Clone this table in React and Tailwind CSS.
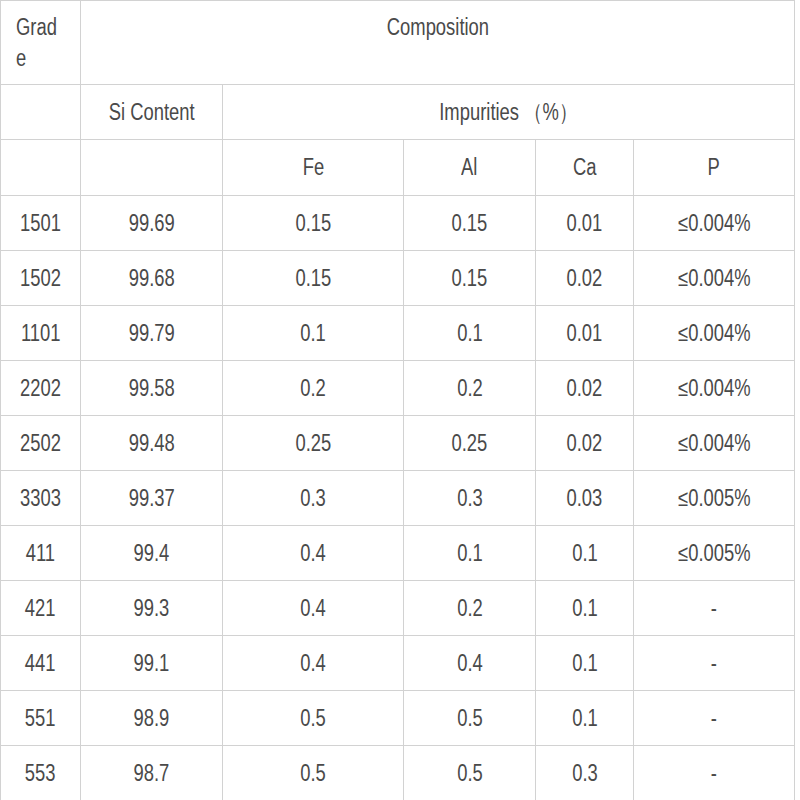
import React from 'react';

const rows = [
    ['1501', '99.69', '0.15', '0.15', '0.01', '≤0.004%'],
    ['1502', '99.68', '0.15', '0.15', '0.02', '≤0.004%'],
    ['1101', '99.79', '0.1', '0.1', '0.01', '≤0.004%'],
    ['2202', '99.58', '0.2', '0.2', '0.02', '≤0.004%'],
    ['2502', '99.48', '0.25', '0.25', '0.02', '≤0.004%'],
    ['3303', '99.37', '0.3', '0.3', '0.03', '≤0.005%'],
    ['411', '99.4', '0.4', '0.1', '0.1', '≤0.005%'],
    ['421', '99.3', '0.4', '0.2', '0.1', '-'],
    ['441', '99.1', '0.4', '0.4', '0.1', '-'],
    ['551', '98.9', '0.5', '0.5', '0.1', '-'],
    ['553', '98.7', '0.5', '0.5', '0.3', '-'],
];

const cell = 'border border-[#d2d2d2] text-center align-middle';

// the source text is a narrow Arial; squeeze Liberation Sans to match
const T = ({ children }) => (
    <span className="inline-block whitespace-nowrap scale-x-[0.8]">{children}</span>
);

const App = () => {
    return (
        <div className="w-[800px] h-[800px] bg-white overflow-hidden text-[#4a4a4a] text-[23px] font-['Liberation_Sans',Arial,sans-serif]">
            <table className="table-fixed border-collapse w-[794px]">
                <colgroup>
                    <col className="w-[80px]" />
                    <col className="w-[142px]" />
                    <col className="w-[181px]" />
                    <col className="w-[132px]" />
                    <col className="w-[98px]" />
                    <col className="w-[161px]" />
                </colgroup>
                <tbody>
                    {/* Header rows */}
                    <tr className="h-[84px]">
                        <td className="border border-[#d2d2d2] align-top text-left pt-[11px] pl-[15px] leading-[31px]">
                            <span className="inline-block w-[54px] break-all origin-left scale-x-[0.8]">Grade</span>
                        </td>
                        <td colSpan="5" className="border border-[#d2d2d2] align-top text-center pt-[11px] leading-[31px]">
                            <T>Composition</T>
                        </td>
                    </tr>
                    <tr className="h-[55px]">
                        <td className={cell}></td>
                        <td className={cell}><T>Si Content</T></td>
                        <td colSpan="4" className={cell}><T>Impurities （%）</T></td>
                    </tr>
                    <tr className="h-[56px]">
                        <td className={cell}></td>
                        <td className={cell}></td>
                        <td className={cell}><T>Fe</T></td>
                        <td className={cell}><T>Al</T></td>
                        <td className={cell}><T>Ca</T></td>
                        <td className={cell}><T>P</T></td>
                    </tr>
                    {rows.map((r) => (
                        <tr key={r[0]} className="h-[55px]">
                            {r.map((v, i) => (
                                <td key={i} className={cell}><T>{v}</T></td>
                            ))}
                        </tr>
                    ))}
                </tbody>
            </table>
        </div>
    );
};

export default App;
